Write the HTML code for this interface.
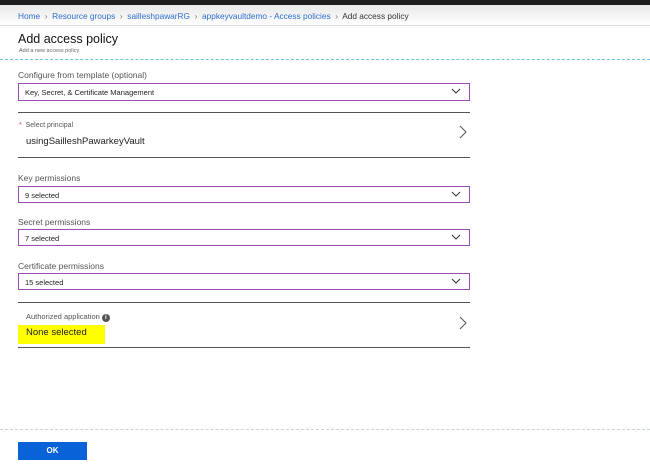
<!DOCTYPE html>
<html><head><meta charset="utf-8"><style>
*{margin:0;padding:0;box-sizing:border-box}
body{width:650px;height:469px;background:#fff;font-family:"Liberation Sans",sans-serif;position:relative;overflow:hidden;color:#222}
.a{position:absolute;white-space:nowrap}
.lbl{font-size:8.5px;color:#555}
.sel{position:absolute;left:18px;width:452px;border:1px solid #9b4fb5;height:17px;font-size:7.5px;color:#222;padding:4px 0 0 6px}
.chev{position:absolute;right:8px;top:3px}
.ln{position:absolute;left:18px;width:452px;height:1px;background:#555}
</style></head><body>
<div class="a" style="left:0;top:0;width:650px;height:5px;background:#1e1e1e"></div>
<div class="a" style="left:0;top:5px;width:650px;height:20px;background:linear-gradient(#e8e8e8,#fff)"></div>
<div class="a" style="left:0;top:25px;width:650px;height:1px;background:#ddd"></div>
<div class="a" style="left:18px;top:11px;font-size:8.3px;color:#2e6fd0">Home <span style="color:#777">&nbsp;›&nbsp;</span> Resource groups <span style="color:#777">&nbsp;›&nbsp;</span> sailleshpawarRG <span style="color:#777">&nbsp;›&nbsp;</span> appkeyvaultdemo - Access policies <span style="color:#777">&nbsp;›&nbsp;</span> <span style="color:#333">Add access policy</span></div>
<div class="a" style="left:18px;top:32px;font-size:12.5px;color:#111">Add access policy</div>
<div class="a" style="left:19px;top:48px;font-size:5.5px;color:#666">Add a new access policy</div>
<div class="a" style="left:0;top:59px;width:650px;height:0;border-top:1px dashed #6cc4e0"></div>

<div class="a lbl" style="left:18px;top:70px">Configure from template (optional)</div>
<div class="sel" style="top:83px;height:18px">Key, Secret, &amp; Certificate Management<svg class="chev" width="10" height="8" viewBox="0 0 10 8"><path d="M1 2l4 4 4-4" fill="none" stroke="#333" stroke-width="1"/></svg></div>

<div class="ln" style="top:112px"></div>
<div class="a" style="left:19px;top:122px;font-size:7px;color:#555"><span style="color:#d33">*</span>&nbsp; Select principal</div>
<div class="a" style="left:26px;top:136px;font-size:9.5px;color:#222">usingSailleshPawarkeyVault</div>
<svg class="a" style="left:459px;top:125px" width="8" height="14" viewBox="0 0 8 14"><path d="M1 1l6 6-6 6" fill="none" stroke="#555" stroke-width="1"/></svg>
<div class="ln" style="top:157px"></div>

<div class="a lbl" style="left:18px;top:173px">Key permissions</div>
<div class="sel" style="top:186px">9 selected<svg class="chev" width="10" height="8" viewBox="0 0 10 8"><path d="M1 2l4 4 4-4" fill="none" stroke="#333" stroke-width="1"/></svg></div>
<div class="a lbl" style="left:18px;top:217px">Secret permissions</div>
<div class="sel" style="top:229px">7 selected<svg class="chev" width="10" height="8" viewBox="0 0 10 8"><path d="M1 2l4 4 4-4" fill="none" stroke="#333" stroke-width="1"/></svg></div>
<div class="a lbl" style="left:18px;top:261px">Certificate permissions</div>
<div class="sel" style="top:273px">15 selected<svg class="chev" width="10" height="8" viewBox="0 0 10 8"><path d="M1 2l4 4 4-4" fill="none" stroke="#333" stroke-width="1"/></svg></div>

<div class="ln" style="top:302px"></div>
<div class="a" style="left:26px;top:312px;font-size:7.5px;color:#555">Authorized application <span style="display:inline-block;width:8px;height:8px;border-radius:50%;background:#555;color:#fff;font-size:6px;text-align:center;line-height:8px;font-weight:bold">i</span></div>
<div class="a" style="left:18px;top:325px;width:87px;height:19px;background:#ffff00"></div>
<div class="a" style="left:26px;top:327px;font-size:9.5px;color:#222">None selected</div>
<svg class="a" style="left:459px;top:316px" width="8" height="14" viewBox="0 0 8 14"><path d="M1 1l6 6-6 6" fill="none" stroke="#555" stroke-width="1"/></svg>
<div class="ln" style="top:347px"></div>

<div class="a" style="left:0;top:429px;width:650px;height:0;border-top:1px dashed #c8d4dc"></div>
<div class="a" style="left:18px;top:442px;width:69px;height:18px;background:#0a62d9;color:#fff;font-size:8px;font-weight:bold;text-align:center;line-height:18px">OK</div>
</body></html>
